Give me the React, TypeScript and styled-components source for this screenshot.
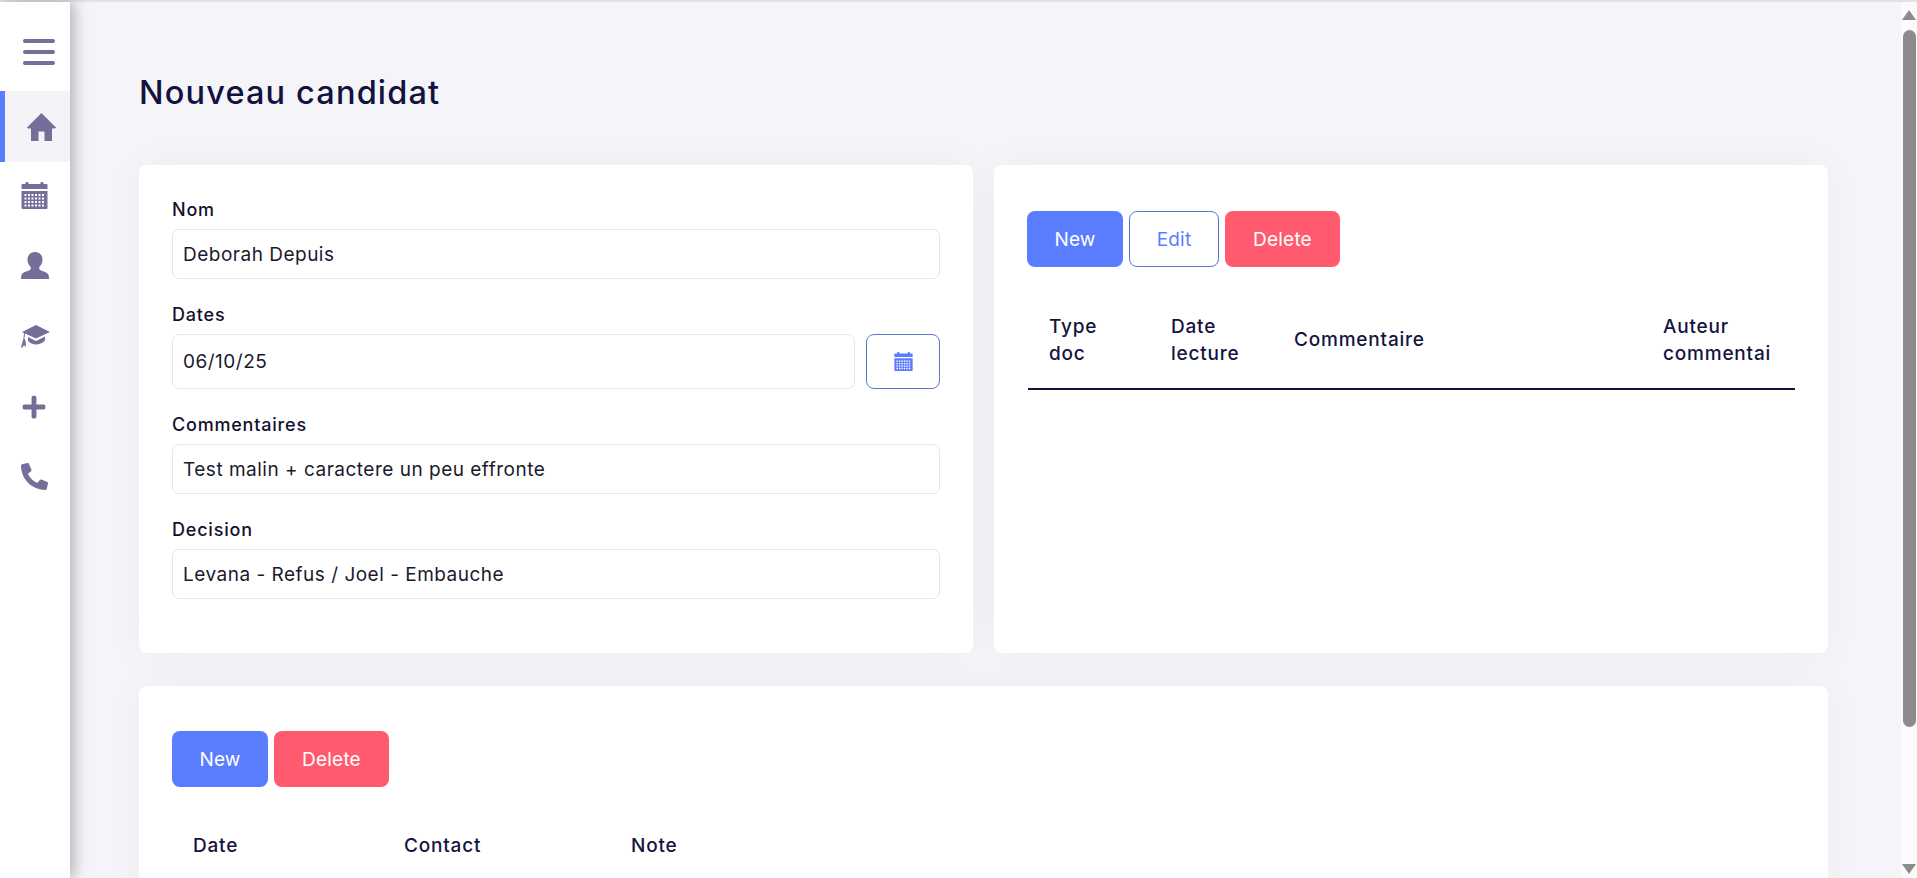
import styled, { createGlobalStyle } from "styled-components";
import { FaPhoneAlt, FaPlus } from "react-icons/fa";

const GlobalStyle = createGlobalStyle`
	html, body {
		margin: 0;
		height: 100%;
		overflow: hidden;
		font-family: "Inter", "Open Sans", sans-serif;
		color: #12123f;
	}
	* {
		box-sizing: border-box;
	}
`;

const CalendarIcon = ({ size }: { size: number }) => (
	<svg width={size} height={size} viewBox="0 0 26 27" fill="currentColor">
		<rect x="4" y="0" width="3" height="4" rx="1" />
		<rect x="19" y="0" width="3" height="4" rx="1" />
		<path d="M1 2h24a1 1 0 0 1 1 1v4H0V3a1 1 0 0 1 1-1z" />
		<path d="M0 9h26v17a1 1 0 0 1-1 1H1a1 1 0 0 1-1-1z" />
		{[0, 1, 2, 3].map((r) =>
			[0, 1, 2, 3, 4, 5].map((c) => (
				<rect key={`${r}-${c}`} x={3 + c * 3.5} y={12 + r * 3.5} width="2" height="2" fill="#fff" />
			)),
		)}
	</svg>
);

const MenuIcon = () => (
	<svg width="32" height="26" viewBox="0 0 32 26" fill="currentColor">
		<rect x="0" y="0" width="32" height="4" rx="2" />
		<rect x="0" y="11" width="32" height="4" rx="2" />
		<rect x="0" y="22" width="32" height="4" rx="2" />
	</svg>
);

const HomeIcon = () => (
	<svg width="29" height="28" viewBox="0 0 29 28" fill="currentColor">
		<path d="M14.500 0L29 14.500l-1 1H25V28h-7.500V18.500h-6V28H4V15.500H1l-1-1z" />
	</svg>
);

const UserIcon = () => (
	<svg width="28" height="27" viewBox="0 0 28 27" fill="currentColor">
		<path d="M14 0c4.200 0 7.500 3 7.500 7.500 0 3-1.200 5.500-3.200 7.500v2c0 1.200 5.700 2.500 8.200 4.500 1 1 1.500 2.500 1.500 5.500H0c0-3 .5-4.500 1.500-5.500C4 19.500 9.700 18.200 9.700 17v-2c-2-2-3.200-4.500-3.200-7.500C6.500 3 9.800 0 14 0z" />
	</svg>
);

const CapIcon = () => (
	<svg width="29" height="24" viewBox="0 0 29 24" fill="currentColor">
		<path d="M15 0l14 7-14 6.500L4 8.500 3.400 14h-1L3 8 1 7z" />
		<path d="M7 12l8 4 9-4.500V15c0 1-4 4.500-9 4.500-4 0-8-2.500-8-4.500z" />
		<path d="M2.900 14c.8 0 1.200.5 1.200 1.200l.5 1.300L5 22l-2-1.800L.7 23 0 22l1.700-5.500.2-1.300c0-.7.400-1.200 1-1.200z" />
	</svg>
);

export default function App() {
	return (
		<Page>
			<GlobalStyle />
			<TopLine />
			<Body>
				<Sidebar>
					<MenuRow>
						<MenuIcon />
					</MenuRow>
					<NavItem $active>
						<HomeIcon />
					</NavItem>
					<NavItem $lift={4}>
						<CalendarIcon size={27} />
					</NavItem>
					<NavItem $lift={3}>
						<UserIcon />
					</NavItem>
					<NavItem>
						<CapIcon />
					</NavItem>
					<NavItem>
						<FaPlus size={26} />
					</NavItem>
					<NavItem $lift={2}>
						<FaPhoneAlt size={27} />
					</NavItem>
				</Sidebar>

				<Main>
					<Title>Nouveau candidat</Title>
					<TopGrid>
						<FormCard>
							<Field>
								<Label>Nom</Label>
								<Input readOnly value="Deborah Depuis" />
							</Field>
							<Field>
								<Label>Dates</Label>
								<DateRow>
									<Input $tall readOnly value="06/10/25" />
									<CalendarButton aria-label="Calendrier">
										<CalendarIcon size={19} />
									</CalendarButton>
								</DateRow>
							</Field>
							<Field>
								<Label>Commentaires</Label>
								<Input readOnly value="Test malin + caractere un peu effronte" />
							</Field>
							<Field>
								<Label>Decision</Label>
								<Input readOnly value="Levana - Refus / Joel - Embauche" />
							</Field>
						</FormCard>

						<TableCard>
							<Toolbar>
								<Button $variant="new">New</Button>
								<Button $variant="edit">Edit</Button>
								<Button $variant="delete">Delete</Button>
							</Toolbar>
							<DocHead>
								<HeadCell>
									Type
									<br />
									doc
								</HeadCell>
								<HeadCell>
									Date
									<br />
									lecture
								</HeadCell>
								<HeadCell>Commentaire</HeadCell>
								<HeadCell>
									Auteur
									<br />
									commentai
								</HeadCell>
							</DocHead>
						</TableCard>
					</TopGrid>

					<BottomCard>
						<Toolbar>
							<Button $variant="new">New</Button>
							<Button $variant="delete">Delete</Button>
						</Toolbar>
						<ContactHead>
							<HeadCell>Date</HeadCell>
							<HeadCell>Contact</HeadCell>
							<HeadCell>Note</HeadCell>
						</ContactHead>
					</BottomCard>
				</Main>

				<ScrollTrack>
					<ArrowUp />
					<ScrollThumb />
					<ArrowDown />
				</ScrollTrack>
			</Body>
		</Page>
	);
}

const Page = styled.div`
	height: 100vh;
	display: flex;
	flex-direction: column;
	overflow: hidden;
`;

const TopLine = styled.div`
	height: 2px;
	flex: none;
	background-color: #e2e2e2;
`;

const Body = styled.div`
	flex: 1;
	display: flex;
	min-height: 0;
`;

const Sidebar = styled.nav`
	width: 70px;
	flex: none;
	display: flex;
	flex-direction: column;
	background-color: #fff;
	color: #736f99;
	box-shadow: 4px 0 14px rgba(0, 0, 0, 0.28);
	z-index: 1;
`;

const MenuRow = styled.div`
	height: 89px;
	flex: none;
	padding: 37px 0 0 23px;
`;

const NavItem = styled.a<{ $active?: boolean; $lift?: number }>`
	height: ${(p) => (p.$active ? "71px" : "70px")};
	flex: none;
	display: flex;
	align-items: center;
	padding-left: ${(p) => (p.$active ? "22px" : "21px")};
	padding-bottom: ${(p) => p.$lift ?? 0}px;
	border-left: ${(p) => (p.$active ? "5px solid #5a7dff" : "0")};
	background-color: ${(p) => (p.$active ? "#f3f3f8" : "transparent")};
`;

const Main = styled.main`
	flex: 1;
	min-width: 0;
	overflow: hidden;
	padding: 68px 73px 0 69px;
	background-color: #f4f4f9;
`;

const Title = styled.h1`
	margin: 0 0 49px;
	font-size: 32.500px;
	line-height: 46px;
	font-weight: 500;
	letter-spacing: 1.15px;
	color: #12123f;
`;

const TopGrid = styled.div`
	display: grid;
	grid-template-columns: 1fr 1fr;
	gap: 21px;
	margin-bottom: 33px;
`;

const Card = styled.section`
	background-color: #fff;
	border-radius: 8px;
	box-shadow: 0 0 40px rgba(0, 0, 0, 0.035);
`;

const FormCard = styled(Card)`
	display: flex;
	flex-direction: column;
	gap: 24px;
	padding: 33px 33px 54px;
`;

const Field = styled.div`
	display: flex;
	flex-direction: column;
	gap: 7px;
`;

const Label = styled.label`
	font-size: 18px;
	line-height: 24px;
	font-weight: 500;
	letter-spacing: 0.8px;
	color: #12122f;
`;

const DateRow = styled.div`
	display: flex;
	gap: 11px;
`;

const Input = styled.input<{ $tall?: boolean }>`
	flex: 1 1 auto;
	min-width: 0;
	width: 100%;
	height: ${(p) => (p.$tall ? "55px" : "50px")};
	padding: 0 10px;
	border: 1px solid #e6e6ea;
	border-radius: 7px;
	outline: none;
	background-color: #fff;
	font-family: inherit;
	font-size: 19px;
	letter-spacing: 0.5px;
	color: #1a1a2e;
`;

const CalendarButton = styled.button`
	width: 74px;
	height: 55px;
	flex: none;
	display: flex;
	align-items: center;
	justify-content: center;
	padding: 0;
	background-color: #fff;
	border: 1px solid #5a78d0;
	border-radius: 8px;
	color: #5a7dff;
`;

const TableCard = styled(Card)`
	padding: 46px 33px 0;
`;

const BottomCard = styled(Card)`
	height: 420px;
	padding: 45px 33px 0;
`;

const Toolbar = styled.div`
	display: flex;
	gap: 6px;
`;

const buttonWidths = { new: "96px", edit: "90px", delete: "115px" };
const buttonColors = { new: "#5a7dff", edit: "#fff", delete: "#ff5a6e" };

const Button = styled.button<{ $variant: "new" | "edit" | "delete" }>`
	width: ${(p) => buttonWidths[p.$variant]};
	height: 56px;
	padding: 0;
	border-radius: 8px;
	border: ${(p) => (p.$variant === "edit" ? "1px solid #5a78d0" : "0")};
	background-color: ${(p) => buttonColors[p.$variant]};
	color: ${(p) => (p.$variant === "edit" ? "#5a7dff" : "#fff")};
	font-family: inherit;
	font-size: 19px;
	font-weight: 400;
	letter-spacing: 0.2px;
`;

const DocHead = styled.div`
	display: grid;
	grid-template-columns: 122px 123px 369px 1fr;
	align-items: center;
	height: 99px;
	margin: 24px 0 0 1px;
	border-bottom: 2px solid #12123f;
`;

const ContactHead = styled.div`
	display: grid;
	grid-template-columns: 211px 227px 1fr;
	align-items: center;
	margin-top: 45px;
`;

const HeadCell = styled.div`
	padding-left: 21px;
	font-size: 19px;
	line-height: 27px;
	font-weight: 500;
	letter-spacing: 0.8px;
	color: #14143f;
`;

const ScrollTrack = styled.div`
	width: 16px;
	flex: none;
	display: flex;
	flex-direction: column;
	align-items: center;
	padding: 8px 0 4px;
	background-color: #fbfbfb;
`;

const ScrollThumb = styled.div`
	width: 13px;
	height: 697px;
	margin-top: 10px;
	border-radius: 7px;
	background-color: #8c8c8c;
`;

const ArrowUp = styled.div`
	width: 0;
	height: 0;
	border-left: 7px solid transparent;
	border-right: 7px solid transparent;
	border-bottom: 10px solid #8c8c8c;
`;

const ArrowDown = styled.div`
	width: 0;
	height: 0;
	margin-top: auto;
	border-left: 7px solid transparent;
	border-right: 7px solid transparent;
	border-top: 10px solid #8c8c8c;
`;
